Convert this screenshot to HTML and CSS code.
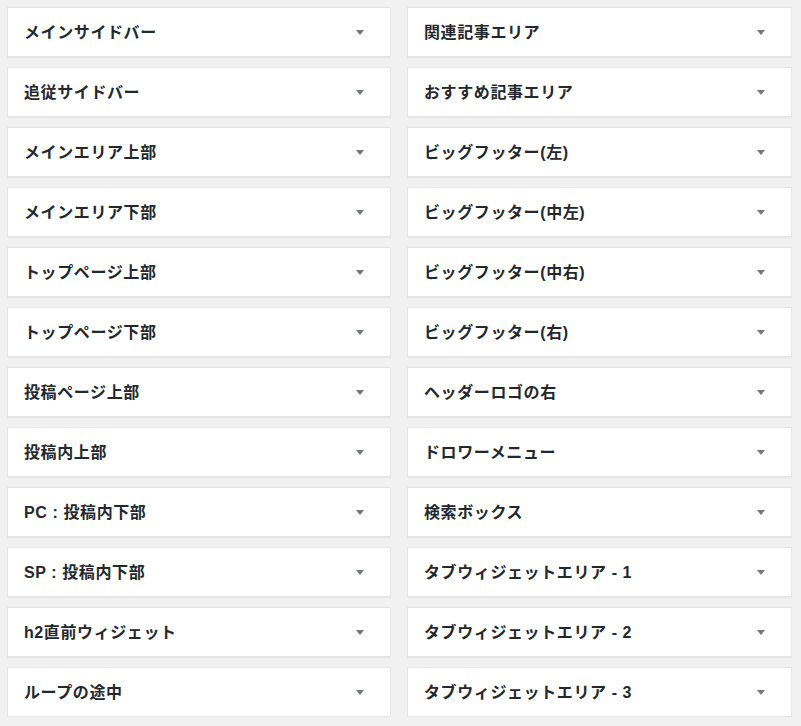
FILE: index.html
```html
<!DOCTYPE html>
<html lang="ja">
<head>
<meta charset="utf-8">
<link rel="stylesheet" href="styles.css">
</head>
<body>
<div class="grid">
  <div class="col">
    <div class="area"><h2>メインサイドバー</h2><span class="arrow"></span></div>
    <div class="area"><h2>追従サイドバー</h2><span class="arrow"></span></div>
    <div class="area"><h2>メインエリア上部</h2><span class="arrow"></span></div>
    <div class="area"><h2>メインエリア下部</h2><span class="arrow"></span></div>
    <div class="area"><h2>トップページ上部</h2><span class="arrow"></span></div>
    <div class="area"><h2>トップページ下部</h2><span class="arrow"></span></div>
    <div class="area"><h2>投稿ページ上部</h2><span class="arrow"></span></div>
    <div class="area"><h2>投稿内上部</h2><span class="arrow"></span></div>
    <div class="area"><h2>PC : 投稿内下部</h2><span class="arrow"></span></div>
    <div class="area"><h2>SP : 投稿内下部</h2><span class="arrow"></span></div>
    <div class="area"><h2>h2直前ウィジェット</h2><span class="arrow"></span></div>
    <div class="area"><h2>ループの途中</h2><span class="arrow"></span></div>
  </div>
  <div class="col">
    <div class="area"><h2>関連記事エリア</h2><span class="arrow"></span></div>
    <div class="area"><h2>おすすめ記事エリア</h2><span class="arrow"></span></div>
    <div class="area"><h2>ビッグフッター(左)</h2><span class="arrow"></span></div>
    <div class="area"><h2>ビッグフッター(中左)</h2><span class="arrow"></span></div>
    <div class="area"><h2>ビッグフッター(中右)</h2><span class="arrow"></span></div>
    <div class="area"><h2>ビッグフッター(右)</h2><span class="arrow"></span></div>
    <div class="area"><h2>ヘッダーロゴの右</h2><span class="arrow"></span></div>
    <div class="area"><h2>ドロワーメニュー</h2><span class="arrow"></span></div>
    <div class="area"><h2>検索ボックス</h2><span class="arrow"></span></div>
    <div class="area"><h2>タブウィジェットエリア - 1</h2><span class="arrow"></span></div>
    <div class="area"><h2>タブウィジェットエリア - 2</h2><span class="arrow"></span></div>
    <div class="area"><h2>タブウィジェットエリア - 3</h2><span class="arrow"></span></div>
  </div>
</div>
</body>
</html>
```
FILE: styles.css
```css
html, body {
  margin: 0;
  padding: 0;
  background: #f1f1f1;
}
body {
  font-family: "Liberation Sans", "Noto Sans CJK JP", sans-serif;
  color: #23282d;
}
.grid {
  display: grid;
  grid-template-columns: 384px 385px;
  column-gap: 16px;
  padding: 7px 0 0 7px;
}
.col {
  display: flex;
  flex-direction: column;
  gap: 10px;
}
.area {
  box-sizing: border-box;
  height: 50px;
  background: #fff;
  border: 1px solid #e5e5e5;
  box-shadow: 0 1px 1px rgba(0,0,0,0.04);
  display: flex;
  align-items: center;
  justify-content: space-between;
  padding: 0 26px 0 16px;
}
.area h2 {
  margin: 1px 0 0;
  font-size: 16px;
  font-weight: 700;
  line-height: 20px;
  letter-spacing: 0.6px;
}
.arrow {
  width: 0;
  height: 0;
  border-left: 4px solid transparent;
  border-right: 4px solid transparent;
  border-top: 5px solid #72777c;
  margin-top: 1px;
}
```
